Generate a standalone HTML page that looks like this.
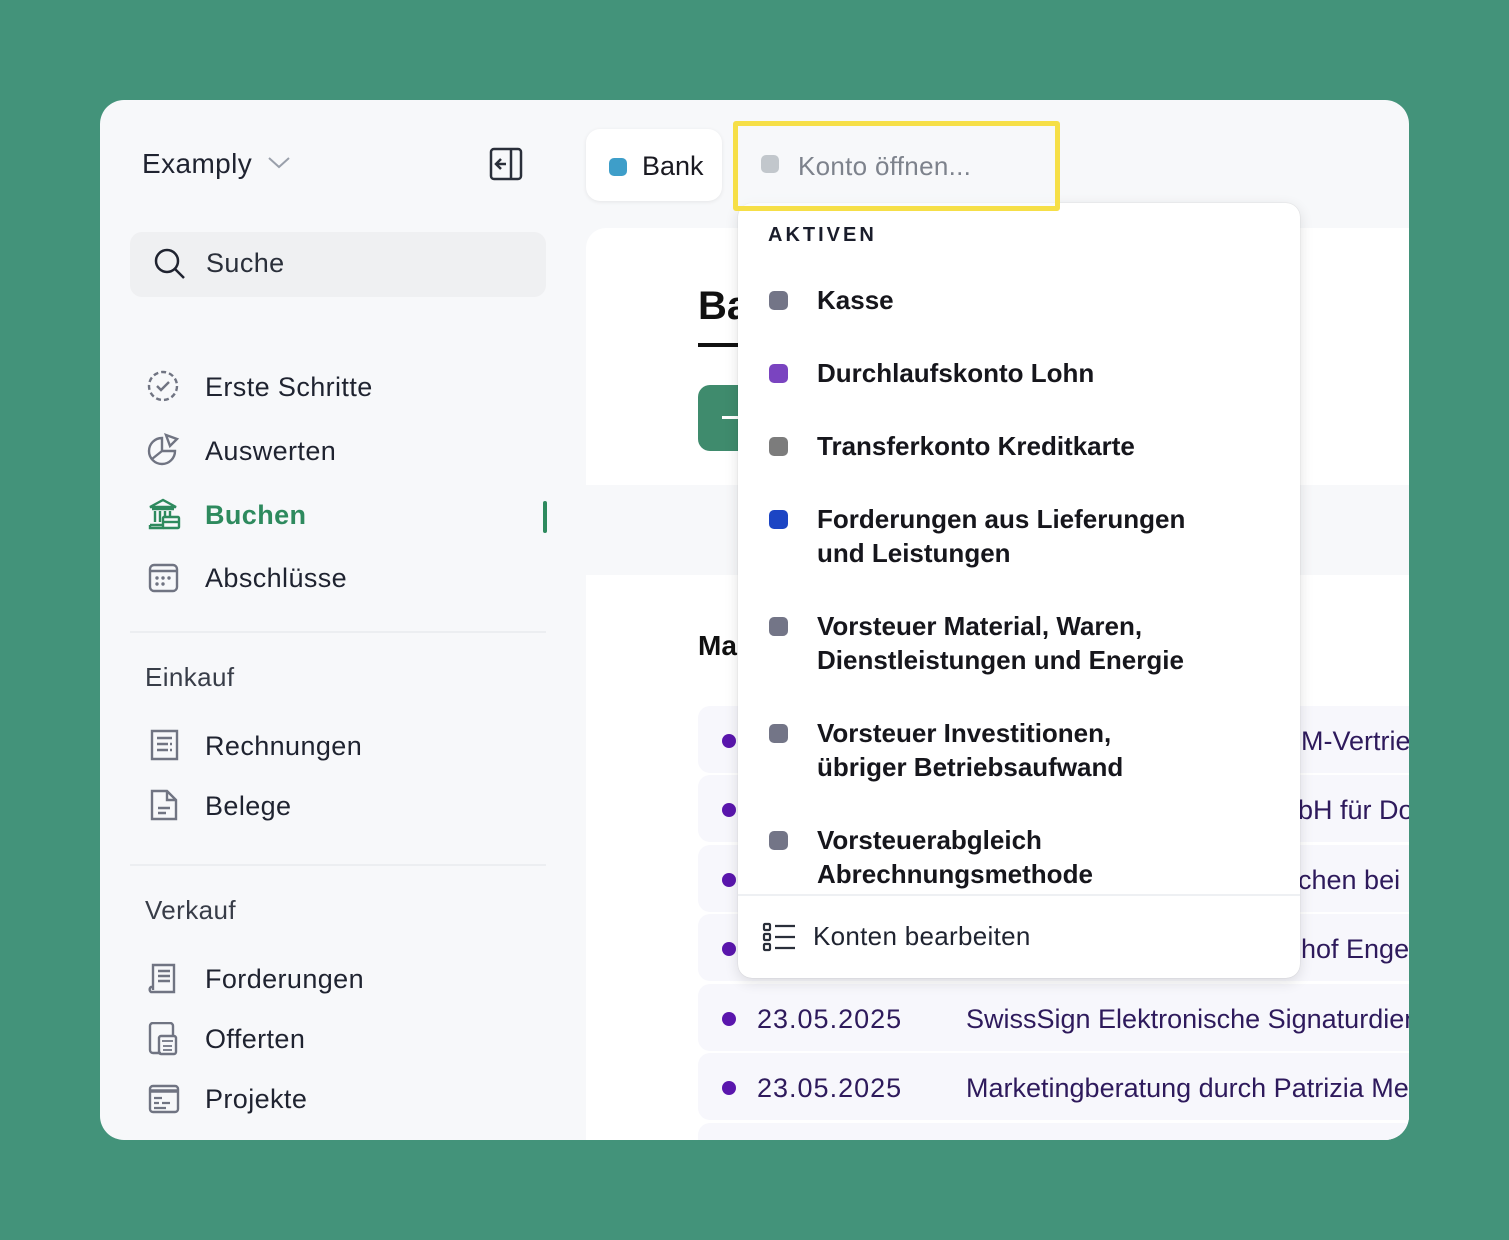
<!DOCTYPE html>
<html><head><meta charset="utf-8"><style>
*{box-sizing:border-box;margin:0;padding:0}
body{width:1509px;height:1240px;background:#43937a;font-family:"Liberation Sans",sans-serif;position:relative;overflow:hidden}
.card{position:absolute;left:100px;top:100px;width:1309px;height:1040px;background:#f7f8fa;border-radius:24px;overflow:hidden}
.a{position:absolute;white-space:nowrap}
.side{color:#1f2330;font-size:27px;letter-spacing:.4px}
.ic{position:absolute;width:34px;height:34px}
.main{position:absolute;left:486px;top:128px;width:900px;height:1000px;background:#fff;border-radius:20px;}
.row{position:absolute;left:598px;width:760px;height:67px;background:#f7f7fc;border-radius:12px;color:#2e1a5c;font-size:27px}
.row .d{position:absolute;left:24px;top:28px;width:14px;height:14px;border-radius:50%;background:#5a16ad}
.dd{position:absolute;left:638px;top:103px;width:562px;height:775px;background:#fff;border-radius:14px;box-shadow:0 4px 14px rgba(0,0,0,.12),0 0 1px rgba(0,0,0,.2)}
.it{position:absolute;left:79px;font-size:26px;font-weight:bold;color:#16161c;line-height:34px;letter-spacing:0}
.sq{position:absolute;left:31px;width:19px;height:19px;border-radius:5px}
</style></head><body>
<div class="card">
 <div class="a side" style="left:42px;top:48px;font-size:28px;font-weight:500;color:#1f2330">Examply</div>
 <svg class="ic" style="left:166px;top:52px;width:26px;height:22px" viewBox="0 0 26 22"><path d="M3 6l10 9 10-9" fill="none" stroke="#9aa0ab" stroke-width="2"/></svg>
 <svg class="ic" style="left:389px;top:47px" viewBox="0 0 34 34"><rect x="2" y="2" width="30" height="30" rx="3" fill="none" stroke="#2a2f3a" stroke-width="2.5"/><path d="M22 2v30M17 17H8M12 12l-5 5 5 5" fill="none" stroke="#2a2f3a" stroke-width="2.5"/></svg>
 <div class="a" style="left:30px;top:132px;width:416px;height:65px;background:#eff0f2;border-radius:12px"></div>
 <svg class="ic" style="left:53px;top:147px" viewBox="0 0 34 34"><circle cx="14" cy="14" r="11" fill="none" stroke="#1f2330" stroke-width="2.5"/><path d="M22 22l9 9" stroke="#1f2330" stroke-width="2.5"/></svg>
 <div class="a side" style="left:106px;top:148px;color:#2a2f3a">Suche</div>

 <svg class="ic" style="left:46px;top:269px" viewBox="0 0 34 34"><circle cx="17" cy="17" r="14" fill="none" stroke="#707482" stroke-width="2.4" stroke-dasharray="5 3"/><path d="M11 17l4 4 8-8" fill="none" stroke="#707482" stroke-width="2.4"/></svg>
 <div class="a side" style="left:105px;top:272px">Erste Schritte</div>
 <svg class="ic" style="left:46px;top:332px" viewBox="0 0 34 34"><path d="M16 6A13 13 0 1 0 29 19H16z M16 19L6 27 M16 19V6" fill="none" stroke="#707482" stroke-width="2.4"/><path d="M20 3l11 4-7 7z" fill="none" stroke="#707482" stroke-width="2.4"/></svg>
 <div class="a side" style="left:105px;top:336px">Auswerten</div>
 <svg class="ic" style="left:47px;top:397px" viewBox="0 0 34 34"><path d="M3 10L16 3l13 7zM5 12h22M8 14v11M13 14v11M18 14v5M23 14v5M3 28h13M3 28v3h14" fill="none" stroke="#2e8a5e" stroke-width="2.4"/><rect x="16" y="20" width="16" height="11" rx="1" fill="none" stroke="#2e8a5e" stroke-width="2.4"/><path d="M16 25h16" stroke="#2e8a5e" stroke-width="2.4"/></svg>
 <div class="a side" style="left:105px;top:400px;color:#2e8a5e;font-weight:bold">Buchen</div>
 <div class="a" style="left:443px;top:401px;width:4px;height:32px;background:#2e8a5e;border-radius:2px"></div>
 <svg class="ic" style="left:47px;top:461px" viewBox="0 0 34 34"><rect x="3" y="4" width="27" height="26" rx="4" fill="none" stroke="#707482" stroke-width="2.4"/><path d="M3 10h27" stroke="#707482" stroke-width="2.4"/><g fill="#707482"><circle cx="10" cy="17" r="1.7"/><circle cx="16" cy="17" r="1.7"/><circle cx="22" cy="17" r="1.7"/><circle cx="10" cy="23" r="1.7"/><circle cx="16" cy="23" r="1.7"/></g></svg>
 <div class="a side" style="left:105px;top:463px">Abschlüsse</div>
 <div class="a" style="left:30px;top:531px;width:416px;height:2px;background:#eceef1"></div>
 <div class="a side" style="left:45px;top:562px;font-size:26px;color:#383d48">Einkauf</div>
 <svg class="ic" style="left:48px;top:628px" viewBox="0 0 34 34"><path d="M4 3h25v28H4z M9 10h15M9 16h11M22 16h2M9 22h11M22 22h2" fill="none" stroke="#707482" stroke-width="2.4"/></svg>
 <div class="a side" style="left:105px;top:631px">Rechnungen</div>
 <svg class="ic" style="left:48px;top:688px" viewBox="0 0 34 34"><path d="M4 3h15l9 9v19H4zM19 3v9h9M10 20h12M10 25h8" fill="none" stroke="#707482" stroke-width="2.4"/></svg>
 <div class="a side" style="left:105px;top:691px">Belege</div>
 <div class="a" style="left:30px;top:764px;width:416px;height:2px;background:#eceef1"></div>
 <div class="a side" style="left:45px;top:795px;font-size:26px;color:#383d48">Verkauf</div>
 <svg class="ic" style="left:46px;top:862px" viewBox="0 0 34 34"><path d="M7 28V3h21v27H5a3 3 0 0 1 0-5h3M12 9h12M12 14h12M12 19h12" fill="none" stroke="#707482" stroke-width="2.4"/></svg>
 <div class="a side" style="left:105px;top:864px">Forderungen</div>
 <svg class="ic" style="left:47px;top:922px" viewBox="0 0 34 34"><path d="M14 31H6a3 3 0 0 1-3-3V4a3 3 0 0 1 3-3h17a3 3 0 0 1 3 3v9" fill="none" stroke="#707482" stroke-width="2.4"/><rect x="12" y="14" width="17" height="18" rx="2" fill="none" stroke="#707482" stroke-width="2.4"/><path d="M15 19h11M16 24h9M16 28h9" stroke="#707482" stroke-width="1.7"/></svg>
 <div class="a side" style="left:105px;top:924px">Offerten</div>
 <svg class="ic" style="left:47px;top:982px" viewBox="0 0 34 34"><rect x="3" y="4" width="28" height="26" rx="3" fill="none" stroke="#707482" stroke-width="2.4"/><path d="M3 9h28" stroke="#707482" stroke-width="3.5"/><path d="M7 16h8M7 21h5M15 21h8M7 26h12" stroke="#707482" stroke-width="2.2"/></svg>
 <div class="a side" style="left:105px;top:984px">Projekte</div>

 <div class="a" style="left:486px;top:29px;width:136px;height:72px;background:#fff;border-radius:14px;box-shadow:0 1px 4px rgba(0,0,0,.08)"></div>
 <div class="a" style="left:509px;top:58px;width:18px;height:18px;border-radius:5px;background:#3e9ec9"></div>
 <div class="a" style="left:542px;top:51px;font-size:27px;color:#1a1a22">Bank</div>
 <div class="main"></div>
 <div class="a" style="left:486px;top:385px;width:823px;height:90px;background:#f7f8fa"></div>
 <div class="a" style="left:598px;top:184px;font-size:40px;font-weight:bold;color:#111">Ba</div>
 <div class="a" style="left:598px;top:243px;width:60px;height:4px;background:#111"></div>
 <div class="a" style="left:598px;top:285px;width:70px;height:66px;background:#3f8b6d;border-radius:12px"></div>
 <div class="a" style="left:622px;top:316px;width:20px;height:3px;background:#fff"></div>
 <div class="a" style="left:598px;top:530px;font-size:28px;font-weight:bold;color:#111">Ma</div>

 <div class="row" style="top:606px"><div class="d"></div><span class="a" style="left:603px;top:20px">M-Vertrieb</span></div>
 <div class="row" style="top:675px"><div class="d"></div><span class="a" style="left:600px;top:20px">bH für Dokumente</span></div>
 <div class="row" style="top:745px"><div class="d"></div><span class="a" style="left:600px;top:20px">chen bei</span></div>
 <div class="row" style="top:814px"><div class="d"></div><span class="a" style="left:603px;top:20px">hof Enge</span></div>
 <div class="row" style="top:884px"><div class="d"></div><span class="a" style="left:59px;top:20px;letter-spacing:1px">23.05.2025</span><span class="a" style="left:268px;top:20px">SwissSign Elektronische Signaturdienste</span></div>
 <div class="row" style="top:953px"><div class="d"></div><span class="a" style="left:59px;top:20px;letter-spacing:1px">23.05.2025</span><span class="a" style="left:268px;top:20px">Marketingberatung durch Patrizia Meier</span></div>
 <div class="row" style="top:1023px"></div>

 <div class="dd">
  <div class="a" style="left:30px;top:21px;font-size:20px;font-weight:bold;letter-spacing:3px;color:#1a1d2b">AKTIVEN</div>
  <div class="sq" style="top:88px;background:#737587"></div><div class="it" style="top:80px">Kasse</div>
  <div class="sq" style="top:161px;background:#7a44c0"></div><div class="it" style="top:153px">Durchlaufskonto Lohn</div>
  <div class="sq" style="top:234px;background:#7c7c7c"></div><div class="it" style="top:226px">Transferkonto Kreditkarte</div>
  <div class="sq" style="top:307px;background:#1c45c4"></div><div class="it" style="top:299px">Forderungen aus Lieferungen<br>und Leistungen</div>
  <div class="sq" style="top:414px;background:#737587"></div><div class="it" style="top:406px">Vorsteuer Material, Waren,<br>Dienstleistungen und Energie</div>
  <div class="sq" style="top:521px;background:#737587"></div><div class="it" style="top:513px">Vorsteuer Investitionen,<br>übriger Betriebsaufwand</div>
  <div class="sq" style="top:628px;background:#737587"></div><div class="it" style="top:620px">Vorsteuerabgleich<br>Abrechnungsmethode</div>
  <div class="a" style="left:0;top:691px;width:562px;height:2px;background:#eef0f3"></div>
  <svg class="a" style="left:24px;top:719px" width="34" height="32" viewBox="0 0 34 32"><g fill="none" stroke="#2a2f3a" stroke-width="2.2"><rect x="2" y="2" width="6" height="6" rx="1"/><rect x="2" y="12" width="6" height="6" rx="1"/><rect x="2" y="22" width="6" height="6" rx="1"/><path d="M13 4h20M13 15h20M13 26h20"/></g></svg>
  <div class="a" style="left:75px;top:718px;font-size:26px;color:#1f2330;letter-spacing:.3px">Konten bearbeiten</div>
 </div>
 <div class="a" style="left:633px;top:21px;width:327px;height:90px;border:5px solid #f6df47;border-radius:3px;background:rgba(247,248,250,.6)"></div>
 <div class="a" style="left:661px;top:55px;width:18px;height:18px;border-radius:5px;background:#c2c7cc"></div>
 <div class="a" style="left:698px;top:51px;font-size:26px;color:#7d828c;letter-spacing:.3px">Konto öffnen...</div>
</div>
</body></html>
